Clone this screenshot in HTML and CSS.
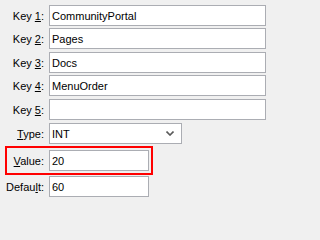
FILE: index.html
```html
<!DOCTYPE html>
<html>
<head>
<meta charset="utf-8">
<link rel="stylesheet" href="styles.css">
</head>
<body>
<div class="form">
  <div class="row r1"><label class="lbl">Key <u>1</u>:</label><div class="field wide">CommunityPortal</div></div>
  <div class="row r2"><label class="lbl">Key <u>2</u>:</label><div class="field wide">Pages</div></div>
  <div class="row r3"><label class="lbl">Key <u>3</u>:</label><div class="field wide">Docs</div></div>
  <div class="row r4"><label class="lbl">Key <u>4</u>:</label><div class="field wide">MenuOrder</div></div>
  <div class="row r5"><label class="lbl">Key <u>5</u>:</label><div class="field wide"></div></div>
  <div class="row r6"><label class="lbl"><u>T</u>ype:</label>
    <div class="field combo"><span>INT</span>
      <svg class="chev" width="8" height="5" viewBox="0 0 8 5"><path d="M0.5 0.5 L4 4 L7.5 0.5" fill="none" stroke="#5a5a5a" stroke-width="1.6"/></svg>
    </div>
  </div>
  <div class="row r7 highlight"><label class="lbl"><u>V</u>alue:</label><div class="field short">20</div></div>
  <div class="row r8"><label class="lbl">Defau<u>l</u>t:</label><div class="field short">60</div></div>
</div>
</body>
</html>
```
FILE: styles.css
```css
html, body {
  margin: 0;
  padding: 0;
  background: #f0f0f0;
}
body {
  width: 271px;
  height: 202px;
  overflow: hidden;
  font-family: "Liberation Sans", Arial, sans-serif;
  font-size: 11px;
  color: #000;
}
.form {
  display: flex;
  flex-direction: column;
  align-items: flex-start;
  padding-top: 5px;
}
.row {
  display: flex;
  align-items: center;
  height: 21px;
}
.r2 { margin-top: 2px; }
.r3 { margin-top: 3px; }
.r4 { margin-top: 2px; }
.r5 { margin-top: 3px; }
.r6 { margin-top: 3px; }
.r7 { margin-top: 2px; }
.r8 { margin-top: 1px; }
.lbl {
  width: 45px;
  box-sizing: border-box;
  text-align: right;
  padding-right: 1px;
  margin-right: 4px;
  white-space: nowrap;
}
.field {
  box-sizing: border-box;
  height: 21px;
  border: 1px solid #abadb3;
  background: #fff;
  padding: 0 2px;
  display: flex;
  align-items: center;
  white-space: nowrap;
}
.wide { width: 217px; }
.short { width: 100px; }
.combo {
  width: 133px;
  justify-content: space-between;
  padding-right: 7px;
}
.chev { display: block; }
.highlight {
  height: 21px;
  margin-left: 5px;
  border: 2px solid #f00;
  padding: 2px 2px 2px 0;
}
.highlight .lbl {
  width: 38px;
}
```
